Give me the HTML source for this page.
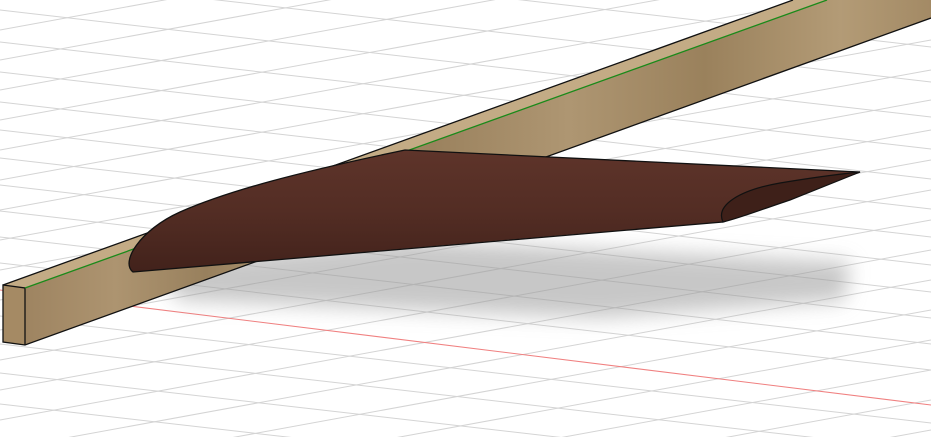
<!DOCTYPE html>
<html><head><meta charset="utf-8"><style>html,body{margin:0;padding:0;background:#fff;overflow:hidden;width:931px;height:437px}svg{display:block}</style></head>
<body>
<svg width="931" height="437" viewBox="0 0 931 437" xmlns="http://www.w3.org/2000/svg" style="overflow:hidden">
<defs>
<linearGradient id="wood" x1="0" y1="0" x2="1" y2="0">
<stop offset="0" stop-color="#9e8461"/><stop offset="0.1" stop-color="#ad9470"/><stop offset="0.2" stop-color="#98805d"/><stop offset="0.3" stop-color="#b09874"/><stop offset="0.45" stop-color="#9b825e"/><stop offset="0.6" stop-color="#ae9672"/><stop offset="0.75" stop-color="#9a815c"/><stop offset="0.9" stop-color="#b39b76"/><stop offset="1" stop-color="#a38a65"/>
</linearGradient>
<linearGradient id="wing" x1="0" y1="0" x2="0" y2="1">
<stop offset="0" stop-color="#5e342a"/><stop offset="0.5" stop-color="#532d24"/><stop offset="1" stop-color="#42221b"/>
</linearGradient>
<filter id="blur" x="-20%" y="-50%" width="140%" height="200%"><feGaussianBlur stdDeviation="10"/></filter>
</defs>
<g stroke="#d4d4d4" stroke-width="1" fill="none">
<line x1="0" y1="-60" x2="931" y2="47"/><line x1="0" y1="-25" x2="931" y2="82"/><line x1="0" y1="10" x2="931" y2="117"/><line x1="0" y1="42" x2="931" y2="149"/><line x1="0" y1="72" x2="931" y2="179"/><line x1="0" y1="102" x2="931" y2="209"/><line x1="0" y1="130" x2="931" y2="237"/><line x1="0" y1="158" x2="931" y2="265"/><line x1="0" y1="185" x2="931" y2="292"/><line x1="0" y1="211" x2="931" y2="318"/><line x1="0" y1="237" x2="931" y2="344"/><line x1="0" y1="263" x2="931" y2="370"/><line x1="0" y1="316" x2="931" y2="423"/><line x1="0" y1="344" x2="931" y2="451"/><line x1="0" y1="373" x2="931" y2="480"/><line x1="0" y1="404" x2="931" y2="511"/>
<line x1="0" y1="30" x2="931" y2="-140"/><line x1="0" y1="60" x2="931" y2="-110"/><line x1="0" y1="90" x2="931" y2="-80"/><line x1="0" y1="120" x2="931" y2="-50"/><line x1="0" y1="150" x2="931" y2="-20"/><line x1="0" y1="180" x2="931" y2="10"/><line x1="0" y1="210" x2="931" y2="40"/><line x1="0" y1="240" x2="931" y2="70"/><line x1="0" y1="270" x2="931" y2="100"/><line x1="0" y1="300" x2="931" y2="130"/><line x1="0" y1="330" x2="931" y2="160"/><line x1="0" y1="360" x2="931" y2="190"/><line x1="0" y1="390" x2="931" y2="220"/><line x1="0" y1="420" x2="931" y2="250"/><line x1="0" y1="450" x2="931" y2="280"/><line x1="0" y1="480" x2="931" y2="310"/><line x1="0" y1="510" x2="931" y2="340"/><line x1="0" y1="540" x2="931" y2="370"/><line x1="0" y1="570" x2="931" y2="400"/><line x1="0" y1="600" x2="931" y2="430"/>
</g>
<line x1="0" y1="290" x2="931" y2="405" stroke="#f08080" stroke-width="1"/>
<path d="M150 262 L410 240 L850 262 L845 300 L600 318 L180 300 Z" fill="#9a9a9a" opacity="0.55" filter="url(#blur)"/>
<polygon points="3,285 793,0 827,0 25,288" fill="#c3ab85"/>
<polygon points="25,288 827,0 931,0 931,18 25,345" fill="url(#wood)"/>
<polygon points="3,285 25,288 25,345 3,342" fill="#a58a64"/>
<polyline points="3,285 793,0" stroke="#111" stroke-width="1.3" fill="none"/>
<polyline points="931,18 25,345 3,342 3,285 25,288 25,345" stroke="#111" stroke-width="1.3" fill="none"/>
<line x1="25" y1="288" x2="827" y2="0" stroke="#1a8a1a" stroke-width="1.3"/>
<path d="M133 272 C120 262 140 230 180 212 C230 190 300 172 405 150 L860 172 L723 222 C500 240 300 258 133 272 Z" fill="url(#wing)" stroke="#111" stroke-width="1.3"/>
<path d="M723 222 C715 205 740 190 780 183 C810 178 840 174 860 172 L790 200 C760 210 740 218 723 222 Z" fill="#3e2019" stroke="#111" stroke-width="1.2"/>
</svg>
</body></html>
